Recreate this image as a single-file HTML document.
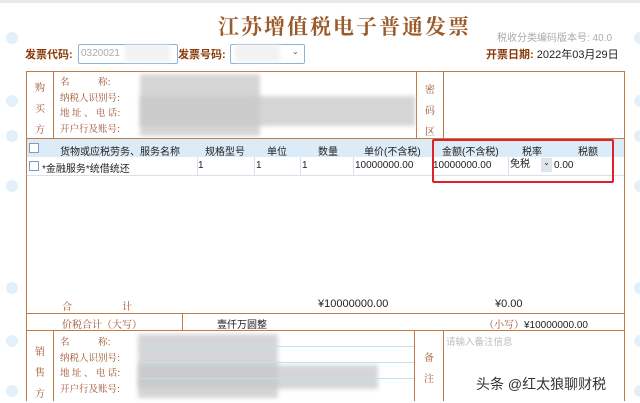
<!DOCTYPE html>
<html><head><meta charset="utf-8"><style>
body{margin:0;width:640px;height:401px;background:#fff;position:relative;overflow:hidden;font-family:"Liberation Sans","Noto Sans CJK SC",sans-serif;font-size:10px;color:#222}
.a{position:absolute;white-space:nowrap}
.s{font-family:"Noto Serif CJK SC","Liberation Serif",serif;color:#a0522d}
.dot{position:absolute;width:12px;height:12px;border-radius:50%;background:#e3f0fa}
.l{position:absolute;background:#c47a45}
.blur{position:absolute;background:#c8c8c8;filter:blur(2px);opacity:.75}
.cb{position:absolute;width:8px;height:8px;border:1px solid #7a9cc6;background:#fff}
</style></head><body>
<div class="a" style="left:0;top:0;width:640px;height:3px;background:#e8eaf0"></div>
<div class="dot" style="left:6px;top:32px"></div><div class="dot" style="left:6px;top:95px"></div><div class="dot" style="left:6px;top:130px"></div><div class="dot" style="left:6px;top:180px"></div><div class="dot" style="left:6px;top:282px"></div><div class="dot" style="left:6px;top:335px"></div><div class="dot" style="left:6px;top:385px"></div>
<div class="dot" style="left:634px;top:32px"></div><div class="dot" style="left:634px;top:95px"></div><div class="dot" style="left:634px;top:130px"></div><div class="dot" style="left:634px;top:180px"></div><div class="dot" style="left:634px;top:282px"></div><div class="dot" style="left:634px;top:335px"></div><div class="dot" style="left:634px;top:385px"></div>
<div class="a s" style="left:218px;top:11px;font-size:21px;letter-spacing:2px;color:#9a5a2a;font-weight:bold">江苏增值税电子普通发票</div>
<div class="a" style="left:497px;top:29px;color:#aaa;font-size:10px">税收分类编码版本号: 40.0</div>
<div class="a" style="left:25px;top:46px;font-size:11px;font-weight:bold;color:#8b3a0a">发票代码:</div>
<div class="a" style="left:78px;top:44px;width:96px;height:18px;border:1px solid #8fb0d8;border-radius:2px;color:#aaa;font-size:10px;line-height:18px;padding-left:2px">0320021</div>
<div class="blur" style="left:125px;top:44px;width:45px;height:18px;background:#eee"></div>
<div class="a" style="left:178px;top:46px;font-size:11px;font-weight:bold;color:#8b3a0a">发票号码:</div>
<div class="a" style="left:230px;top:44px;width:73px;height:18px;border:1px solid #8fb0d8;border-radius:2px"></div>
<div class="blur" style="left:235px;top:44px;width:45px;height:18px;background:#eee"></div>
<div class="a" style="left:292px;top:47px;font-size:8px;color:#555">⌄</div>
<div class="a" style="left:486px;top:46px;font-size:11px;color:#222"><b style="color:#8b3a0a">开票日期:</b> 2022年03月29日</div>
<div class="l" style="left:26px;top:71px;width:599px;height:1px"></div>
<div class="l" style="left:26px;top:71px;width:1px;height:330px"></div>
<div class="l" style="left:624px;top:71px;width:1px;height:330px"></div>
<div class="l" style="left:26px;top:138px;width:599px;height:1px"></div>
<div class="l" style="left:26px;top:313px;width:599px;height:1px"></div>
<div class="l" style="left:26px;top:330px;width:599px;height:1px"></div>
<div class="l" style="left:53px;top:71px;width:1px;height:67px"></div>
<div class="l" style="left:416px;top:71px;width:1px;height:67px"></div>
<div class="l" style="left:443px;top:71px;width:1px;height:67px"></div>
<div class="l" style="left:182px;top:313px;width:1px;height:17px"></div>
<div class="l" style="left:53px;top:330px;width:1px;height:71px"></div>
<div class="l" style="left:414px;top:330px;width:1px;height:71px"></div>
<div class="l" style="left:443px;top:330px;width:1px;height:71px"></div>
<div class="a s" style="left:35px;top:76px;font-size:10px;line-height:21px;width:10px;white-space:normal">购买方</div>
<div class="a s" style="left:60px;top:74px;font-size:9.5px;line-height:15.5px">名&emsp;&emsp;&emsp;称:<br>纳税人识别号:<br>地 址 、 电 话:<br>开户行及账号:</div>
<div class="blur" style="left:140px;top:74px;width:120px;height:62px"></div>
<div class="blur" style="left:140px;top:96px;width:275px;height:30px"></div>
<div class="a s" style="left:425px;top:78px;font-size:10px;line-height:21px;width:10px;white-space:normal">密码区</div>
<div class="a s" style="left:35px;top:340px;font-size:10px;line-height:21px;width:10px;white-space:normal">销售方</div>
<div class="a s" style="left:60px;top:334px;font-size:9.5px;line-height:15.5px">名&emsp;&emsp;&emsp;称:<br>纳税人识别号:<br>地 址 、 电 话:<br>开户行及账号:</div>
<div class="blur" style="left:138px;top:334px;width:140px;height:64px"></div>
<div class="blur" style="left:138px;top:365px;width:240px;height:24px"></div>
<div class="a" style="left:138px;top:346px;width:276px;height:1px;background:#bfe0f2"></div>
<div class="a" style="left:138px;top:362px;width:276px;height:1px;background:#bfe0f2"></div>
<div class="a" style="left:138px;top:378px;width:276px;height:1px;background:#bfe0f2"></div>
<div class="a s" style="left:424px;top:346px;font-size:10px;line-height:21px;width:10px;white-space:normal">备注</div>
<div class="a" style="left:446px;top:334px;color:#bbb;font-size:9.5px">请输入备注信息</div>
<div class="a" style="left:27px;top:139px;width:597px;height:18px;background:#dcebf8"></div>
<div class="a" style="left:27px;top:175px;width:597px;height:1px;background:#dde"></div>
<div class="cb" style="left:29px;top:143px"></div><div class="cb" style="left:29px;top:161px"></div>
<div class="a" style="left:60px;top:143px">货物或应税劳务、服务名称</div>
<div class="a" style="left:205px;top:143px">规格型号</div>
<div class="a" style="left:267px;top:143px">单位</div>
<div class="a" style="left:318px;top:143px">数量</div>
<div class="a" style="left:364px;top:143px">单价(不含税)</div>
<div class="a" style="left:442px;top:143px">金额(不含税)</div>
<div class="a" style="left:522px;top:143px">税率</div>
<div class="a" style="left:578px;top:143px">税额</div>
<div class="a" style="left:42px;top:160px">*金融服务*统借统还</div>
<div class="a" style="left:198px;top:160px">1</div><div class="a" style="left:256px;top:160px">1</div><div class="a" style="left:302px;top:160px">1</div>
<div class="a" style="left:355px;top:160px">10000000.00</div>
<div class="a" style="left:433px;top:160px">10000000.00</div>
<div class="a" style="left:510px;top:159px;line-height:12px">免税</div>
<div class="a" style="left:541px;top:158px;width:11px;height:14px;background:#dde4ec;font-size:8px;text-align:center">⌄</div>
<div class="a" style="left:554px;top:160px">0.00</div>
<div class="a" style="left:197px;top:157px;width:1px;height:18px;background:#dde"></div>
<div class="a" style="left:254px;top:157px;width:1px;height:18px;background:#dde"></div>
<div class="a" style="left:300px;top:157px;width:1px;height:18px;background:#dde"></div>
<div class="a" style="left:353px;top:157px;width:1px;height:18px;background:#dde"></div>
<div class="a" style="left:432px;top:157px;width:1px;height:18px;background:#dde"></div>
<div class="a" style="left:508px;top:157px;width:1px;height:18px;background:#dde"></div>
<div class="a" style="left:432px;top:139px;width:178px;height:40px;border:2px solid #e0202a;border-radius:2px"></div>
<div class="a s" style="left:62px;top:298px;font-size:10px">合&emsp;&emsp;&emsp;&emsp;&emsp;计</div>
<div class="a" style="left:318px;top:298px;font-size:11px">¥10000000.00</div>
<div class="a" style="left:495px;top:298px;font-size:11px">¥0.00</div>
<div class="a s" style="left:62px;top:316px;font-size:10px">价税合计（大写）</div>
<div class="a" style="left:217px;top:316px">壹仟万圆整</div>
<div class="a" style="left:484px;top:316px"><span class="s">（小写）</span>¥10000000.00</div>
<div class="a" style="left:476px;top:374px;font-size:14px;color:#333">头条 @红太狼聊财税</div>
</body></html>
